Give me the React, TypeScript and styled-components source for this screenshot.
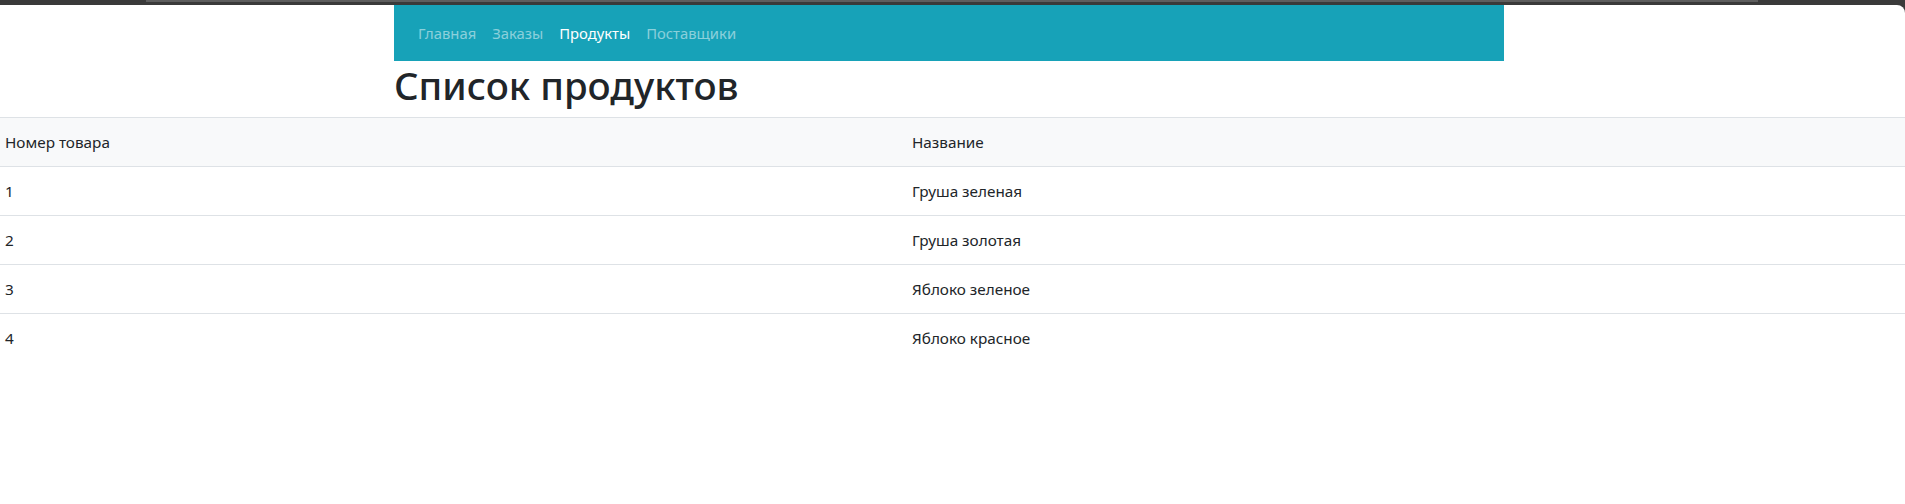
import React from "react";
import styled, { createGlobalStyle } from "styled-components";

const Global = createGlobalStyle`
  html, body { margin: 0; padding: 0; background: #3a3a3a; }
  body {
    font-family: "Noto Sans", "Open Sans", sans-serif;
    font-size: 16px;
    line-height: 24px;
    color: #212529;
  }
`;

const Frame = styled.div`
  display: flex;
  flex-direction: column;
  min-height: 504px;
  background: #3a3a3a;
`;

const FrameTop = styled.div`
  height: 5px;
  display: flex;
`;

const FrameHighlight = styled.div`
  margin-left: 146px;
  width: 1612px;
  height: 2px;
  background: #5e5e5e;
`;

const Page = styled.div`
  flex: 1;
  background: #ffffff;
  border-top-right-radius: 8px;
`;

const Container = styled.div`
  width: 1110px;
  margin-left: 394px;
`;

const Navbar = styled.nav`
  display: flex;
  align-items: center;
  height: 56px;
  box-sizing: border-box;
  padding: 8px 16px;
  background: #17a2b8;
`;

const NavLink = styled.a<{ $active?: boolean }>`
  padding: 8px 8px;
  font-size: 14.8px;
  line-height: 24px;
  text-decoration: none;
  color: ${(p) => (p.$active ? "#ffffff" : "rgba(255, 255, 255, 0.5)")};
`;

const Title = styled.h1`
  margin: 0 0 8px;
  font-size: 38.4px;
  line-height: 48px;
  font-weight: 500;
  color: #212529;
`;

const Table = styled.table`
  width: 100%;
  border-collapse: collapse;
  table-layout: fixed;
`;

const HeadRow = styled.tr`
  background: #f8f9fa;
`;

const Cell = styled.td`
  padding: 12px 5px;
  border-top: 1px solid #dee2e6;
  text-align: left;
  font-weight: 400;
  font-size: 15.3px;
  line-height: 24px;
  vertical-align: top;
`;

const HeadCell = styled(Cell).attrs({ as: "th" })``;

const products = [
  { id: 1, name: "Груша зеленая" },
  { id: 2, name: "Груша золотая" },
  { id: 3, name: "Яблоко зеленое" },
  { id: 4, name: "Яблоко красное" },
];

export default function App() {
  return (
    <>
      <Global />
      <Frame>
        <FrameTop>
          <FrameHighlight />
        </FrameTop>
        <Page>
          <Container>
            <Navbar>
              <NavLink href="#">Главная</NavLink>
              <NavLink href="#">Заказы</NavLink>
              <NavLink href="#" $active>Продукты</NavLink>
              <NavLink href="#">Поставщики</NavLink>
            </Navbar>
            <Title>Список продуктов</Title>
          </Container>
          <Table>
            <colgroup>
              <col style={{ width: "907px" }} />
              <col />
            </colgroup>
            <thead>
              <HeadRow>
                <HeadCell>Номер товара</HeadCell>
                <HeadCell>Название</HeadCell>
              </HeadRow>
            </thead>
            <tbody>
              {products.map((p) => (
                <tr key={p.id}>
                  <Cell>{p.id}</Cell>
                  <Cell>{p.name}</Cell>
                </tr>
              ))}
            </tbody>
          </Table>
        </Page>
      </Frame>
    </>
  );
}
